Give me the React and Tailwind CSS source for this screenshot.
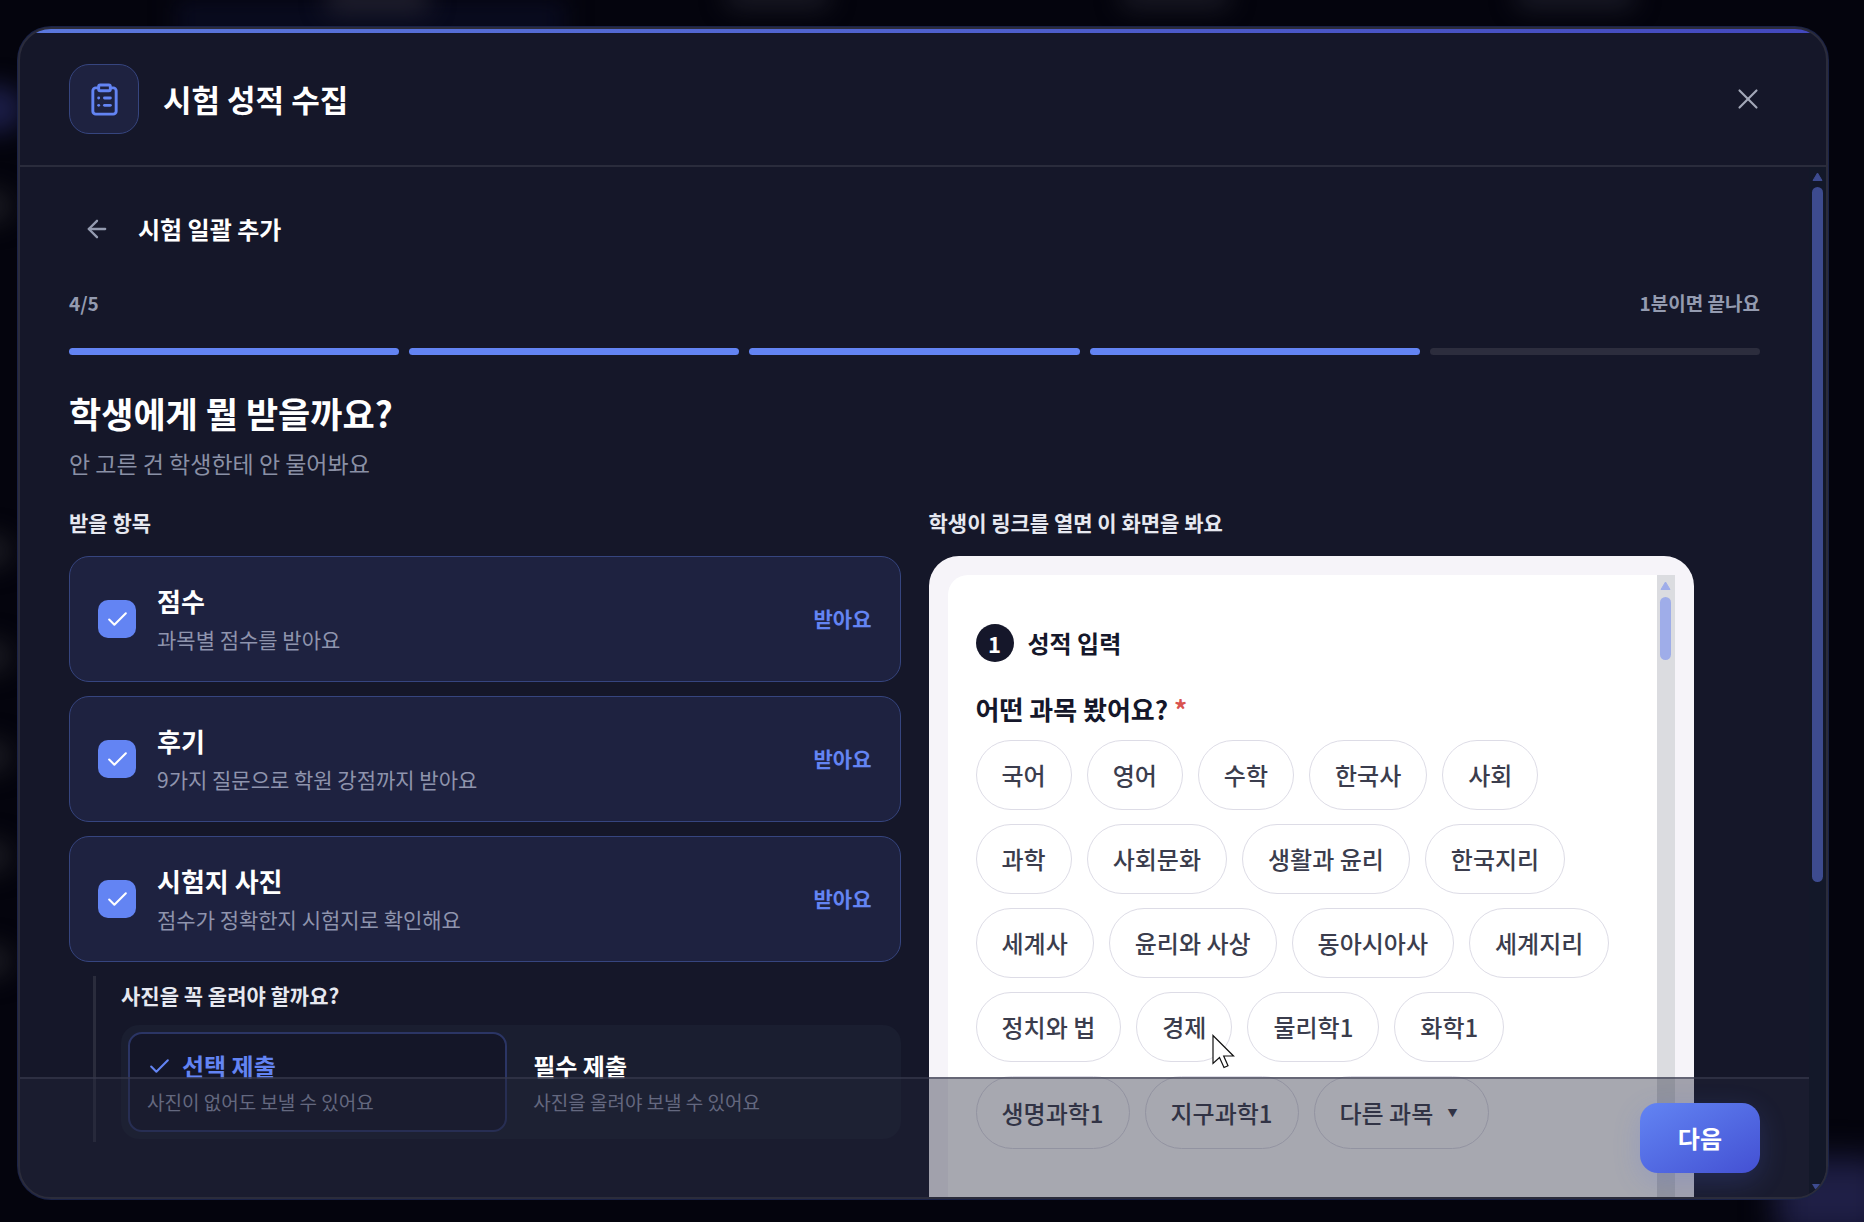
import React, { useState } from "react";
import { ArrowLeft, Check, ClipboardList, X } from "lucide-react";

const ITEMS = [
  { id: "score", title: "점수", desc: "과목별 점수를 받아요" },
  { id: "review", title: "후기", desc: "9가지 질문으로 학원 강점까지 받아요" },
  { id: "photo", title: "시험지 사진", desc: "점수가 정확한지 시험지로 확인해요" },
];

const PHOTO_OPTIONS = [
  { id: "optional", title: "선택 제출", desc: "사진이 없어도 보낼 수 있어요" },
  { id: "required", title: "필수 제출", desc: "사진을 올려야 보낼 수 있어요" },
];

const SUBJECT_ROWS = [
  ["국어", "영어", "수학", "한국사", "사회"],
  ["과학", "사회문화", "생활과 윤리", "한국지리"],
  ["세계사", "윤리와 사상", "동아시아사", "세계지리"],
  ["정치와 법", "경제", "물리학1", "화학1"],
];

const TOTAL_STEPS = 5;
const CURRENT_STEP = 4;

// Blurred page behind the dialog
const Backdrop = () => (
  <div className="pointer-events-none absolute inset-0 overflow-hidden" aria-hidden="true">
    <div className="absolute left-44 top-0 h-10 w-[390px] bg-[#090b1f] blur-md" />
    <div className="absolute left-[325px] -top-3 h-6 w-[105px] rounded-full bg-[#232230] blur-md" />
    <div className="absolute left-[725px] -top-4 h-6 w-[105px] rounded-full bg-[#1b1b26] blur-md" />
    <div className="absolute left-[1120px] -top-4 h-6 w-[110px] rounded-full bg-[#1b1b26] blur-md" />
    <div className="absolute left-[1515px] -top-4 h-6 w-[120px] rounded-full bg-[#1b1c28] blur-md" />
    <div className="absolute -left-8 top-[85px] h-12 w-14 rounded-full bg-[#1b1d46] blur-md" />
    <div className="absolute -left-8 top-[190px] h-8 w-11 rounded-full bg-[#1c1c23] blur-md" />
    <div className="absolute -left-8 top-[535px] h-8 w-11 rounded-full bg-[#1c1c23] blur-md" />
    <div className="absolute -left-8 top-[640px] h-8 w-11 rounded-full bg-[#1c1c23] blur-md" />
    <div className="absolute -left-8 top-[740px] h-8 w-11 rounded-full bg-[#1c1c23] blur-md" />
    <div className="absolute -left-8 top-[840px] h-8 w-11 rounded-full bg-[#1c1c23] blur-md" />
    <div className="absolute -left-8 top-[945px] h-8 w-11 rounded-full bg-[#1c1c23] blur-md" />
    <div className="absolute -right-6 -bottom-4 h-20 w-28 rounded-2xl bg-[#1f1f46] blur-lg" />
  </div>
);

const Header = () => (
  <header className="flex items-center justify-between border-b-2 border-[#2a2c3c] py-[31px] pr-12 pl-[49px]">
    <div className="flex items-center gap-6">
      <span className="flex size-[70px] items-center justify-center rounded-[20px] border border-[#36457f] bg-[#1e2240] text-[#6384f3]">
        <ClipboardList size={35} strokeWidth={2} />
      </span>
      <h1 className="text-[31px] leading-10 font-bold text-white">시험 성적 수집</h1>
    </div>
    <button type="button" aria-label="닫기" className="flex size-[60px] items-center justify-center text-[#a3a8b8]">
      <X size={34} strokeWidth={1.5} />
    </button>
  </header>
);

const Progress = () => (
  <div>
    <div className="flex items-center justify-between text-[19px] leading-7 font-semibold text-[#949bb0]">
      <span>
        {CURRENT_STEP}/{TOTAL_STEPS}
      </span>
      <span>1분이면 끝나요</span>
    </div>
    <div className="mt-[31px] flex gap-[10px]">
      {Array.from({ length: TOTAL_STEPS }, (_, i) => (
        <span key={i} className={i < CURRENT_STEP ? "h-[7px] flex-1 rounded-full bg-[#6384f3]" : "h-[7px] flex-1 rounded-full bg-[#2c2d3d]"} />
      ))}
    </div>
  </div>
);

const ItemCard = ({ item, checked, onToggle }) => (
  <label className="flex h-[126px] cursor-pointer items-center rounded-[20px] border border-[#36457f] bg-[#1e2240] px-7">
    <input type="checkbox" checked={checked} onChange={onToggle} className="sr-only" />
    <span className="flex size-[38px] shrink-0 items-center justify-center rounded-[10px] bg-[#6384f3] text-white">
      {checked && <Check size={25} strokeWidth={2} />}
    </span>
    <span className="ml-[21px] flex flex-1 flex-col gap-1">
      <span className="text-[26px] leading-9 font-bold text-white">{item.title}</span>
      <span className="text-[21px] leading-8 text-[#8f94ad]">{item.desc}</span>
    </span>
    <span className="text-[21px] font-bold text-[#6384f3]">{checked ? "받아요" : "안 받아요"}</span>
  </label>
);

const PhotoRule = ({ value, onChange }) => (
  <div role="radiogroup" aria-labelledby="photo-rule-label" className="ml-6 border-l-[3px] border-[#2a2c3c] pb-[3px] pl-[25px]">
    <p id="photo-rule-label" className="pt-[3px] text-[21px] leading-8 font-bold text-[#e6e8f0]">
      사진을 꼭 올려야 할까요?
    </p>
    <div className="mt-[14px] grid grid-cols-2 gap-[7px] rounded-[18px] bg-[#1a1e30] p-[7px]">
      {PHOTO_OPTIONS.map((option) => {
        const selected = option.id === value;
        return (
          <label
            key={option.id}
            className={
              selected
                ? "flex h-[100px] cursor-pointer flex-col justify-center rounded-[14px] border-2 border-[#2b3565] bg-[#141628] px-[17px] pt-[2px]"
                : "flex h-[100px] cursor-pointer flex-col justify-center rounded-[14px] border-2 border-transparent px-[17px] pt-[2px]"
            }
          >
            <input type="radio" name="photo-rule" checked={selected} onChange={() => onChange(option.id)} className="sr-only" />
            <span className={selected ? "flex items-center gap-[10px] text-2xl leading-9 font-bold text-[#6384f3]" : "text-2xl leading-9 font-bold text-white"}>
              {selected && <Check size={25} strokeWidth={2} />}
              {option.title}
            </span>
            <span className="mt-[2px] text-[19px] leading-8 text-[#8f94ad]">{option.desc}</span>
          </label>
        );
      })}
    </div>
  </div>
);

const StudentPreview = () => (
  <div className="max-w-[765px] rounded-[30px] bg-[#f6f4f9] p-[19px]">
    <div className="flex h-[760px] overflow-hidden rounded-l-[20px] bg-white">
      <div className="flex-1 px-7 pt-[49px]">
        <div className="flex items-center gap-[14px]">
          <span className="flex size-[38px] items-center justify-center rounded-full bg-[#15172a] text-[22px] font-bold text-white">1</span>
          <span className="text-2xl leading-9 font-bold text-[#15172a]">성적 입력</span>
        </div>
        <p className="mt-[29px] text-[26px] leading-9 font-bold text-[#15172a]">
          어떤 과목 봤어요?<span className="ml-[6px] text-[#d9534f]">*</span>
        </p>
        <div className="mt-[13px] flex flex-col gap-[14px] text-2xl font-medium text-[#3b3d4d]">
          {SUBJECT_ROWS.map((row) => (
            <div key={row[0]} className="flex gap-[15px]">
              {row.map((subject) => (
                <button key={subject} type="button" className="h-[70px] rounded-full border border-[#dddce6] px-[25px] whitespace-nowrap">
                  {subject}
                </button>
              ))}
            </div>
          ))}
          <div className="flex gap-[15px]">
            <button type="button" className="h-[73px] rounded-full border border-[#dddce6] px-[25px]">생명과학1</button>
            <button type="button" className="h-[73px] rounded-full border border-[#dddce6] px-[25px]">지구과학1</button>
            <label className="flex h-[73px] items-center gap-[14px] rounded-full border border-[#dddce6] pr-[30px] pl-[25px]">
              <select aria-label="다른 과목" className="appearance-none bg-transparent">
                <option>다른 과목</option>
              </select>
              <span className="text-[10px]" aria-hidden="true">▼</span>
            </label>
          </div>
        </div>
      </div>
      <div className="flex w-[18px] flex-col items-center gap-[7px] bg-[#dbdce0] pt-[6px]" aria-hidden="true">
        <svg viewBox="0 0 11 9" className="h-[9px] w-[11px] fill-[#9fade9]">
          <path d="M5.5 1L10 8.5H1Z" stroke="#9fade9" strokeLinejoin="round" />
        </svg>
        <span className="h-[63px] w-[11px] rounded-full bg-[#9fade9]" />
      </div>
    </div>
  </div>
);

const Cursor = () => (
  <svg viewBox="0 0 24 35" className="pointer-events-none absolute left-[1212px] top-[1034px] h-[35px] w-[24px]" fill="#ffffff" stroke="#111111" strokeWidth="1.2" aria-hidden="true">
    <path d="M1 1.5V29.5L7.5 23.5L12 33.5L16 31.7L11.7 22H21.5Z" />
  </svg>
);

const App = () => {
  const [checked, setChecked] = useState({ score: true, review: true, photo: true });
  const [photoRule, setPhotoRule] = useState("optional");

  const toggle = (id) => setChecked({ ...checked, [id]: !checked[id] });

  return (
    <div className="relative h-screen overflow-hidden bg-[#04040d] pt-[27px] pr-9 pb-[23px] pl-[18px] font-['Noto_Sans_CJK_KR',sans-serif]">
      <Backdrop />

      {/* Dialog */}
      <div
        role="dialog"
        aria-label="시험 성적 수집"
        className="relative flex h-full flex-col overflow-hidden rounded-[33px] border-2 border-[#2b2c3b] bg-[#151729] shadow-[0_0_0_1px_#1a2247]"
      >
        <div className="h-1 shrink-0 bg-linear-to-r from-[#5b78dd] to-[#4348bd]" />
        <Header />

        <div className="relative flex min-h-0 flex-1">
          <main className="min-w-0 flex-1 overflow-hidden px-[49px] pt-[34px]">
            <div className="flex items-center gap-[14px]">
              <button type="button" aria-label="뒤로" className="flex size-[55px] items-center justify-center text-[#949bb0]">
                <ArrowLeft size={28} strokeWidth={2} />
              </button>
              <h2 className="text-2xl leading-9 font-bold text-white">시험 일괄 추가</h2>
            </div>

            <div className="mt-[33px]">
              <Progress />
            </div>

            <h3 className="mt-[34px] text-[35px] leading-[48px] font-bold text-white">학생에게 뭘 받을까요?</h3>
            <p className="mt-2 text-[23px] leading-9 text-[#8a90a5]">안 고른 건 학생한테 안 물어봐요</p>

            <div className="mt-[25px] grid grid-cols-2 gap-7">
              <section>
                <h4 className="text-[21px] leading-8 font-bold text-[#e6e8f0]">받을 항목</h4>
                <div className="mt-[18px] flex flex-col gap-[14px]">
                  {ITEMS.map((item) => (
                    <ItemCard key={item.id} item={item} checked={checked[item.id]} onToggle={() => toggle(item.id)} />
                  ))}
                  {checked.photo && <PhotoRule value={photoRule} onChange={setPhotoRule} />}
                </div>
              </section>

              <section>
                <h4 className="text-[21px] leading-8 font-bold text-[#e6e8f0]">학생이 링크를 열면 이 화면을 봐요</h4>
                <div className="mt-[18px]">
                  <StudentPreview />
                </div>
              </section>
            </div>
          </main>

          {/* Scrollbar */}
          <div className="flex w-[17px] flex-col items-center bg-[#131829] pt-[5px]" aria-hidden="true">
            <svg viewBox="0 0 11 9" className="h-[9px] w-[11px] shrink-0 fill-[#3d4b8f]">
              <path d="M5.5 1L10 8.5H1Z" stroke="#3d4b8f" strokeLinejoin="round" />
            </svg>
            <span className="mt-[6px] h-[695px] w-[11px] shrink-0 rounded-full bg-[#3d4b8f]" />
            <svg viewBox="0 0 11 9" className="mt-auto mb-1 h-[9px] w-[11px] shrink-0 fill-[#3d4b8f]">
              <path d="M0 0H11L5.5 9Z" />
            </svg>
          </div>

          <footer className="absolute right-[17px] bottom-0 left-0 flex justify-end border-t-2 border-[#3a3c50]/60 bg-[#24263a]/40 px-[49px] py-6">
            <button type="button" className="h-[70px] rounded-[18px] bg-linear-to-br from-[#6384f3] to-[#4450d3] px-[38px] text-2xl font-bold text-white shadow-[0_8px_28px_rgba(85,110,240,0.2)]">
              다음
            </button>
          </footer>
        </div>
      </div>

      <Cursor />
    </div>
  );
};

export default App;
